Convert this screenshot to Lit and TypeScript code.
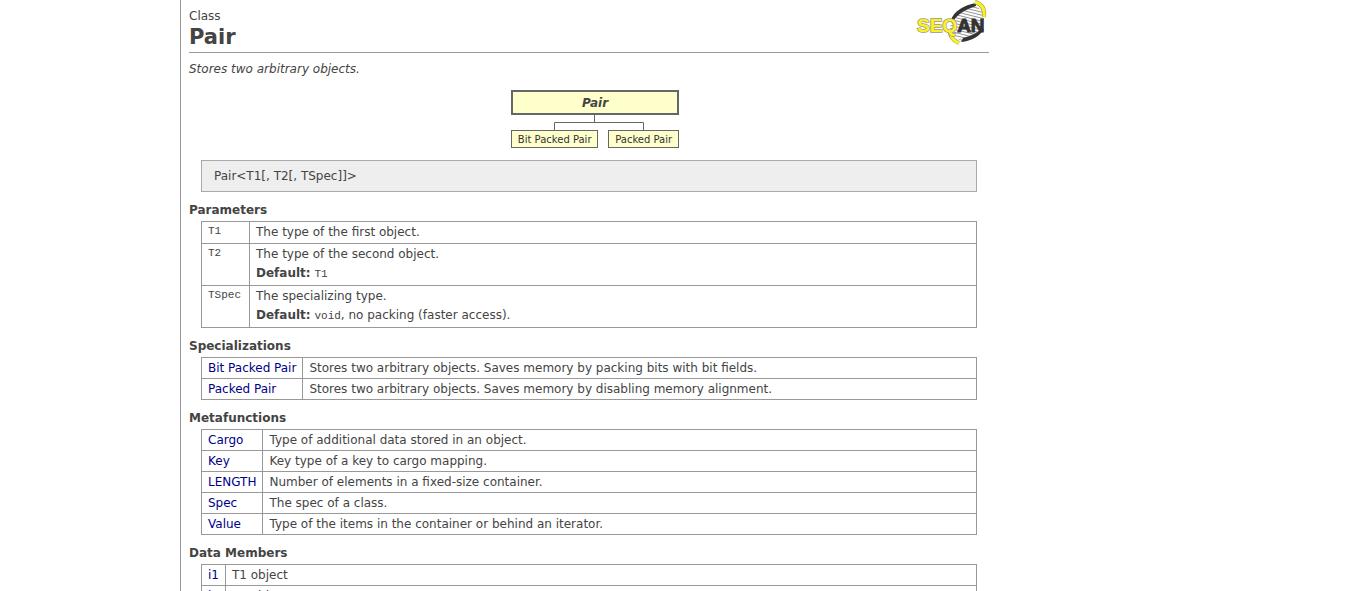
import { LitElement, html, css, svg } from "lit";
import { customElement } from "lit/decorators.js";

type Row = [string, string];

const specializations: Row[] = [
  ["Bit Packed Pair", "Stores two arbitrary objects. Saves memory by packing bits with bit fields."],
  ["Packed Pair", "Stores two arbitrary objects. Saves memory by disabling memory alignment."],
];

const metafunctions: Row[] = [
  ["Cargo", "Type of additional data stored in an object."],
  ["Key", "Key type of a key to cargo mapping."],
  ["LENGTH", "Number of elements in a fixed-size container."],
  ["Spec", "The spec of a class."],
  ["Value", "Type of the items in the container or behind an iterator."],
];

const members: Row[] = [
  ["i1", "T1 object"],
  ["i2", "T2 object"],
];

@customElement("seqan-logo")
export class SeqanLogo extends LitElement {
  static styles = css`
    :host { display: block; line-height: 0; }
    .word { font: bold 19px "Liberation Sans", Arial, sans-serif; paint-order: stroke; }
    .seq { fill: #fff21c; stroke: #998; stroke-width: 1.5px; }
    .an { fill: #333; stroke: #333; stroke-width: 1px; }
  `;

  render() {
    return html`
      <svg width="74" height="46" viewBox="0 0 74 46" role="img" aria-label="SeqAn">
        <defs>
          <clipPath id="leaf">
            <path d="M35 32C34 24 39 13 60 4L69 14C70 24 64 35 46 41Z" />
          </clipPath>
        </defs>
        <g clip-path="url(#leaf)" stroke="#777" stroke-width="0.8">
          ${[-2, 1, 4, 7, 10, 13, 16, 19, 22, 25, 28, 31, 34, 37, 40].map(
            (y) => svg`<path d=${`M34 ${y}L74 ${y + 10}`} />`,
          )}
        </g>
        <path d="M36 20C39 11 49 5 61 3L61 6C52 9 44 13 39 20Z" fill="#333" />
        <path d="M69 29C65 36 57 41 46 42L48 38C56 36 62 33 66 29Z" fill="#333" />
        <path d="M60 2C67 4 70 9 69 17" fill="none" stroke="#887" stroke-width="4" />
        <path d="M60 2C67 4 70 9 69 17" fill="none" stroke="#fff21c" stroke-width="3" />
        <path d="M35 31C35 37 39 41 44 43" fill="none" stroke="#887" stroke-width="4" />
        <path d="M35 31C35 37 39 41 44 43" fill="none" stroke="#fff21c" stroke-width="3" />
        <text class="word" x="2" y="32"><tspan class="seq">SEQ</tspan><tspan class="an">AN</tspan></text>
      </svg>
    `;
  }
}

@customElement("app-root")
export class AppRoot extends LitElement {
  static styles = css`
    :host {
      display: block;
      color: #444;
      background: #fff;
      font: 12px/19px Verdana, "DejaVu Sans", sans-serif;
    }
    .page {
      box-sizing: border-box;
      max-width: 809px;
      min-height: 100vh;
      margin-left: 180px;
      padding-left: 8px;
      border-left: 1px solid #999;
    }
    header {
      display: flex;
      justify-content: space-between;
      height: 52px;
      border-bottom: 1px solid #999;
    }
    .kind { padding-top: 7px; }
    h1 { margin: 0; font-size: 21px; line-height: 22px; }
    .summary { margin: 0; padding: 7px 0 11px; font-style: italic; }
    .tree { display: flex; justify-content: center; padding-left: 12px; }
    .hierarchy { display: flex; flex-direction: column; width: 168px; }
    .current {
      padding-top: 2px;
      border: 2px solid #666;
      background: #ffc;
      color: #444;
      font-weight: bold;
      font-style: italic;
      line-height: 19px;
      text-align: center;
    }
    .links { display: block; width: 168px; height: 15px; }
    .children { display: flex; gap: 10px; }
    .child {
      flex: 1 1 auto;
      padding: 2px 5px 0;
      border: 1px solid #666;
      background: #ffc;
      color: #333;
      font-size: 10px;
      line-height: 14px;
      text-align: center;
      text-decoration: none;
      white-space: nowrap;
    }
    .signature {
      margin: 12px 12px 0;
      padding: 6px 12px 5px;
      border: 1px solid #aaa;
      background: #eee;
    }
    h2 { margin: 0; padding: 9px 0 1px; font-size: 12px; line-height: 19px; }
    .block { padding: 0 12px; }
    table { width: 100%; border-collapse: collapse; }
    th, td {
      padding: 1px 6px 0;
      border: 1px solid #999;
      font-weight: normal;
      text-align: left;
      vertical-align: top;
    }
    th { width: 1px; white-space: nowrap; }
    .params th, .params td { padding-bottom: 1px; }
    .params th { width: 35px; line-height: 14px; }
    .default { padding-bottom: 1px; }
    code { font: 11px "Liberation Mono", "Courier New", monospace; }
    th a { color: #008; text-decoration: none; }
  `;

  private section(title: string, rows: Row[]) {
    return html`
      <section>
        <h2>${title}</h2>
        <div class="block">
          <table>
            ${rows.map(
              ([name, text]) => html`<tr><th scope="row"><a href="#">${name}</a></th><td>${text}</td></tr>`,
            )}
          </table>
        </div>
      </section>
    `;
  }

  render() {
    return html`
      <main class="page">
        <header>
          <div>
            <div class="kind">Class</div>
            <h1>Pair</h1>
          </div>
          <seqan-logo></seqan-logo>
        </header>
        <p class="summary">Stores two arbitrary objects.</p>
        <div class="tree">
          <div class="hierarchy">
            <div class="current">Pair</div>
            <svg class="links" viewBox="0 0 168 15" fill="none" stroke="#666" aria-hidden="true">
              <path d="M83.5 0V7.500M43.500 15V7.500H132.500V15" />
            </svg>
            <div class="children">
              <a class="child" href="#">Bit Packed Pair</a>
              <a class="child" href="#">Packed Pair</a>
            </div>
          </div>
        </div>
        <div class="signature">Pair&lt;T1[, T2[, TSpec]]&gt;</div>
        <section>
          <h2>Parameters</h2>
          <div class="block">
            <table class="params">
              <tr><th scope="row"><code>T1</code></th><td>The type of the first object.</td></tr>
              <tr>
                <th scope="row"><code>T2</code></th>
                <td>
                  The type of the second object.
                  <div class="default"><b>Default:</b> <code>T1</code></div>
                </td>
              </tr>
              <tr>
                <th scope="row"><code>TSpec</code></th>
                <td>
                  The specializing type.
                  <div class="default"><b>Default:</b> <code>void</code>, no packing (faster access).</div>
                </td>
              </tr>
            </table>
          </div>
        </section>
        ${this.section("Specializations", specializations)}
        ${this.section("Metafunctions", metafunctions)}
        ${this.section("Data Members", members)}
      </main>
    `;
  }
}
